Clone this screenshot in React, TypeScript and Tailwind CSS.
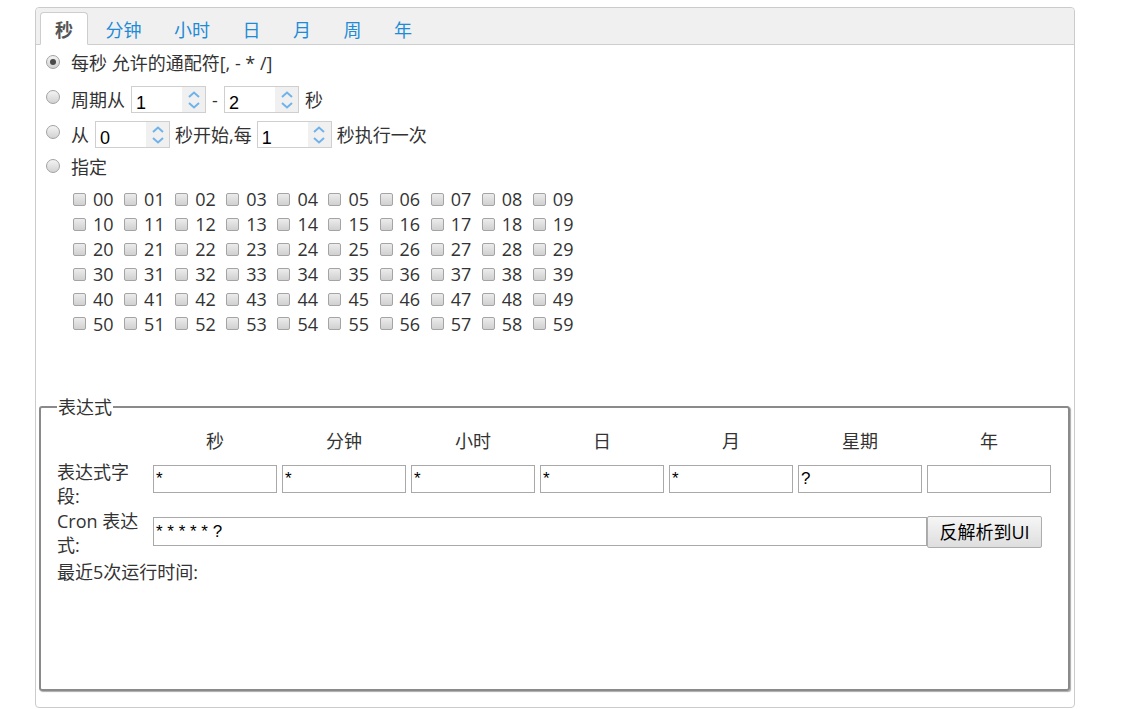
import React from 'react';

const tabs = ['秒', '分钟', '小时', '日', '月', '周', '年'];
const heads = ['秒', '分钟', '小时', '日', '月', '星期', '年'];
const fieldVals = ['*', '*', '*', '*', '*', '?', ''];

function Radio({ checked = false, className = '' }: { checked?: boolean; className?: string }) {
  return (
    <span
      className={`flex h-[14px] w-[14px] shrink-0 items-center justify-center rounded-full border border-[#a2a2a2] bg-gradient-to-b from-[#f4f4f4] to-[#d2d2d2] ${className}`}
    >
      {checked && <span className="h-[6px] w-[6px] rounded-full bg-[#4a4a4a]" />}
    </span>
  );
}

function Chevron({ up }: { up?: boolean }) {
  return (
    <svg width="12" height="7" viewBox="0 0 12 7">
      <polyline
        points={up ? '1,6 6,1.5 11,6' : '1,1 6,5.5 11,1'}
        fill="none"
        stroke="#6fb3ea"
        strokeWidth="2"
      />
    </svg>
  );
}

function Spin({ v }: { v: string }) {
  return (
    <div className="flex h-[27px] w-[75px] shrink-0 border border-[#cfcfcf] bg-white">
      <span className="flex-1 pl-[4px] pt-[5px] font-['Liberation_Sans',sans-serif] text-[18px] leading-[22px] text-black">
        {v}
      </span>
      <span className="flex w-[23px] flex-col items-center justify-center gap-[4px] bg-[#f0f0f0]">
        <Chevron up />
        <Chevron />
      </span>
    </div>
  );
}

function Check() {
  return (
    <span className="h-[13px] w-[13px] shrink-0 rounded-[2px] border border-[#a4a4a4] bg-gradient-to-b from-[#ececec] to-[#d0d0d0]" />
  );
}

export default function App() {
  const nums = Array.from({ length: 60 }, (_, i) => String(i).padStart(2, '0'));

  return (
    <div className="min-h-screen bg-white pl-[35px] pt-[7px] font-['Open_Sans','Noto_Sans_CJK_SC',sans-serif] text-[18px] text-[#333]">
      <div className="flex h-[701px] w-[1040px] flex-col rounded-[4px] border border-[#cbcbcb]">
        {/* tab strip */}
        <div className="flex h-[37px] items-end gap-[2.5px] rounded-t-[4px] border-b border-[#cdcdcd] bg-[#f0f0f0] pl-[4px]">
          {tabs.map((t, i) =>
            i === 0 ? (
              <div
                key={t}
                className="-mb-px flex h-[33px] items-center rounded-t-[4px] border border-[#cdcdcd] border-b-white bg-white px-[14px] pt-[2px] font-bold leading-none text-[#555]"
              >
                {t}
              </div>
            ) : (
              <div
                key={t}
                className="-mb-px flex h-[33px] items-center border border-transparent px-[14px] pt-[2px] leading-none text-[#1e8bd6]"
              >
                {t}
              </div>
            )
          )}
        </div>

        {/* options */}
        <div className="flex flex-col pl-[10px] leading-[24px]">
          <div className="mt-[6px] flex h-[24px] items-center gap-[11px]">
            <Radio checked className="mb-[2px]" />
            <span>每秒 允许的通配符[, - * /]</span>
          </div>

          <div className="mt-[11px] flex h-[27px] items-center">
            <Radio className="mb-[6px]" />
            <span className="ml-[11px]">周期从</span>
            <span className="ml-[6px]">
              <Spin v="1" />
            </span>
            <span className="w-[18px] text-center">-</span>
            <Spin v="2" />
            <span className="ml-[6px]">秒</span>
          </div>

          <div className="mt-[8px] flex h-[27px] items-center">
            <Radio className="mb-[6px]" />
            <span className="ml-[11px]">从</span>
            <span className="ml-[6px]">
              <Spin v="0" />
            </span>
            <span className="ml-[5px]">秒开始,每</span>
            <span className="ml-[5px]">
              <Spin v="1" />
            </span>
            <span className="ml-[5px]">秒执行一次</span>
          </div>

          <div className="mt-[7px] flex h-[24px] items-center gap-[11px]">
            <Radio className="mb-[2px]" />
            <span>指定</span>
          </div>

          <div className="mt-[8px] grid grid-cols-[repeat(10,51.1px)] pl-[27px]">
            {nums.map((n) => (
              <div key={n} className="flex h-[24.9px] items-center gap-[7px]">
                <Check />
                <span className="leading-none">{n}</span>
              </div>
            ))}
          </div>
        </div>

        {/* expression */}
        <fieldset className="ml-[3px] mt-[59px] h-[296px] w-[1031px] rounded-[3px] border-2 border-[#8a8a8a] pl-[16px] shadow-[1px_1px_1px_#aaa] leading-[24px]">
          <legend className="px-px">表达式</legend>

          <div className="mt-[10px] flex pl-[96px]">
            {heads.map((h) => (
              <div key={h} className="mr-[5px] w-[124px] text-center">
                {h}
              </div>
            ))}
          </div>

          <div className="mt-[7px] flex items-start">
            <div className="mr-[10px] w-[86px]">表达式字段:</div>
            {fieldVals.map((v, i) => (
              <input
                key={i}
                readOnly
                value={v}
                className="mr-[5px] mt-[5px] h-[28px] w-[124px] border border-[#a9a9a9] px-[2px] font-['Liberation_Sans',sans-serif] text-[17px] text-black outline-none"
              />
            ))}
          </div>

          <div className="mt-px flex items-start">
            <div className="mr-[10px] w-[86px]">Cron 表达式:</div>
            <input
              readOnly
              value="* * * * * ?"
              className="mt-[8px] h-[29px] w-[774px] border border-[#a9a9a9] px-[2px] font-['Liberation_Sans',sans-serif] text-[17px] text-black outline-none"
            />
            <button className="mt-[7px] h-[32px] w-[115px] rounded-[2px] border border-[#adadad] bg-gradient-to-b from-[#f6f6f6] to-[#dedede] text-[18px] text-black">
              反解析到UI
            </button>
          </div>

          <div className="mt-[3px]">最近5次运行时间:</div>
        </fieldset>
      </div>
    </div>
  );
}
